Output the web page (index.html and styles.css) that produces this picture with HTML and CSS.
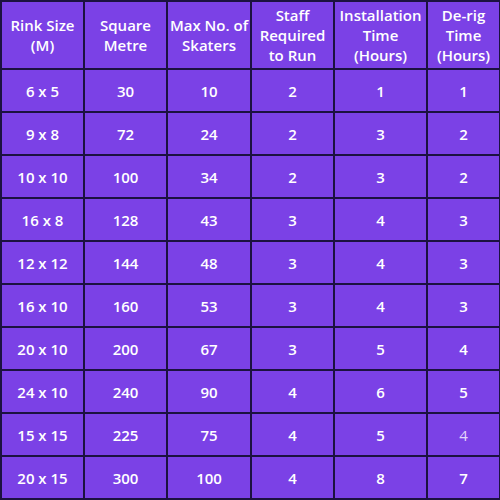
FILE: index.html
```html
<!DOCTYPE html>
<html>
<head>
<meta charset="utf-8">
<link rel="stylesheet" href="styles.css">
</head>
<body>
<table class="rinks">
  <colgroup>
    <col class="c1"><col class="c2"><col class="c3"><col class="c4"><col class="c5"><col class="c6">
  </colgroup>
  <thead>
    <tr class="head">
      <th>Rink Size<br>(M)</th>
      <th>Square<br>Metre</th>
      <th>Max No. of<br>Skaters</th>
      <th>Staff<br>Required<br>to Run</th>
      <th>Installation<br>Time<br>(Hours)</th>
      <th>De-rig<br>Time<br>(Hours)</th>
    </tr>
  </thead>
  <tbody>
    <tr><td>6 x 5</td><td>30</td><td>10</td><td>2</td><td>1</td><td>1</td></tr>
    <tr><td>9 x 8</td><td>72</td><td>24</td><td>2</td><td>3</td><td>2</td></tr>
    <tr><td>10 x 10</td><td>100</td><td>34</td><td>2</td><td>3</td><td>2</td></tr>
    <tr><td>16 x 8</td><td>128</td><td>43</td><td>3</td><td>4</td><td>3</td></tr>
    <tr><td>12 x 12</td><td>144</td><td>48</td><td>3</td><td>4</td><td>3</td></tr>
    <tr><td>16 x 10</td><td>160</td><td>53</td><td>3</td><td>4</td><td>3</td></tr>
    <tr><td>20 x 10</td><td>200</td><td>67</td><td>3</td><td>5</td><td>4</td></tr>
    <tr><td>24 x 10</td><td>240</td><td>90</td><td>4</td><td>6</td><td>5</td></tr>
    <tr><td>15 x 15</td><td>225</td><td>75</td><td>4</td><td>5</td><td class="soft">4</td></tr>
    <tr><td>20 x 15</td><td>300</td><td>100</td><td>4</td><td>8</td><td>7</td></tr>
  </tbody>
</table>
</body>
</html>
```

FILE: styles.css
```css
html, body {
  margin: 0;
  padding: 0;
  background: #ffffff;
}
.rinks {
  border-collapse: collapse;
  width: 499px;
  table-layout: fixed;
  background: #7b41e6;
  color: #ffffff;
  font-family: "Open Sans", "Liberation Sans", sans-serif;
  font-weight: 600;
  font-size: 15px;
}
.c1 { width: 83px; }
.c2 { width: 83px; }
.c3 { width: 84px; }
.c4 { width: 83px; }
.c5 { width: 93px; }
.c6 { width: 73px; }
.rinks th, .rinks td {
  border: 2px solid #1c1240;
  text-align: center;
  vertical-align: middle;
  padding: 0;
}
.rinks th {
  font-weight: 600;
  line-height: 20px;
  height: 66px;
}
.rinks td {
  height: 41px;
  line-height: 20px;
}
.rinks td.soft {
  color: #e3d6fa;
  font-weight: 400;
}
```
